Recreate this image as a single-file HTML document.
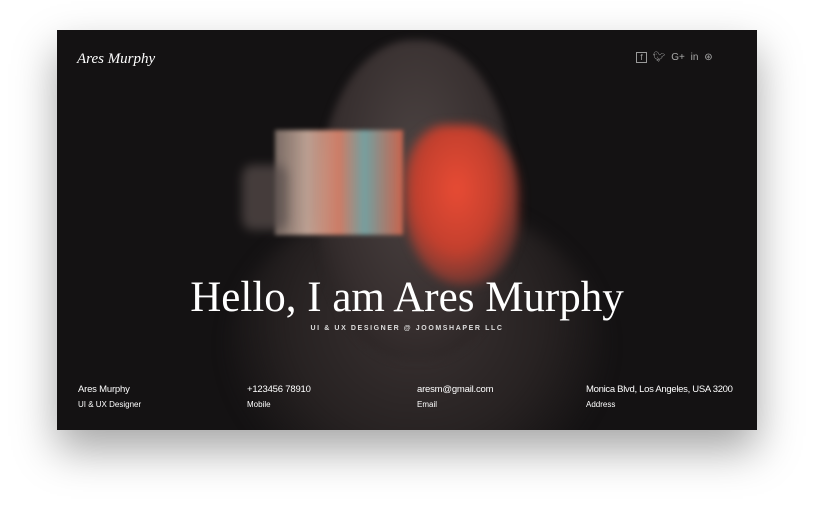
<!DOCTYPE html>
<html><head><style>
body{margin:0;width:815px;height:516px;background:#fff;position:relative;overflow:hidden;font-family:"Liberation Sans",sans-serif}
.card{position:absolute;left:57px;top:30px;width:700px;height:400px;background:#141213;box-shadow:0 20px 40px rgba(0,0,0,.35);overflow:hidden}
.a{position:absolute}
.t{color:#fff;position:absolute;white-space:nowrap}
</style></head><body>
<div class="card">
 <div class="a" style="left:170px;top:170px;width:380px;height:300px;border-radius:50%;background:radial-gradient(ellipse at 50% 40%,#3a3232 0%,#262121 50%,rgba(20,18,19,0) 75%);filter:blur(8px)"></div>
 <div class="a" style="left:262px;top:10px;width:195px;height:320px;border-radius:48% 48% 45% 45%;background:radial-gradient(ellipse at 50% 40%,#4d4443 0%,#362e2e 60%,#1e1a1a 100%);filter:blur(4px)"></div>
 <div class="a" style="left:348px;top:95px;width:115px;height:160px;border-radius:35% 45% 45% 50%;background:radial-gradient(ellipse at 45% 40%,#e84b34 0%,#c4402e 45%,rgba(120,60,55,.4) 80%,rgba(0,0,0,0) 100%);filter:blur(5px)"></div>
 <div class="a" style="left:218px;top:100px;width:128px;height:105px;background:linear-gradient(90deg,#8a7a72 0%,#d8b8a8 25%,#e88a70 50%,#7fb2b2 70%,#e06a50 100%);opacity:.85;filter:blur(2px)"></div>
 <div class="a" style="left:185px;top:135px;width:45px;height:65px;background:#5a4f4d;border-radius:20%;opacity:.7;filter:blur(5px)"></div>
 <div class="t" style="left:20px;top:21px;font-family:'Liberation Serif',serif;font-style:italic;font-size:15px">Ares Murphy</div>
 <div class="t" style="left:579px;top:22px;font-size:10px;color:#aaa;word-spacing:3px">
  <span style="display:inline-block;width:9px;height:9px;border:1px solid #999;font-size:8px;line-height:9px;text-align:center">f</span>
  <span>🐦︎</span> <span>G+</span> <span>in</span> <span>⊛</span></div>
 <div class="t" style="left:0;width:700px;text-align:center;top:243px;font-family:'Liberation Serif',serif;font-size:43px">Hello, I am Ares Murphy</div>
 <div class="t" style="left:0;width:700px;text-align:center;top:295px;font-size:7px;letter-spacing:1.6px;font-weight:bold;color:#ddd">UI &amp; UX DESIGNER @ JOOMSHAPER LLC</div>
 <div class="t" style="left:21px;top:354px;font-size:9.5px;letter-spacing:-.2px">Ares Murphy</div>
 <div class="t" style="left:21px;top:370px;font-size:8px">UI &amp; UX Designer</div>
 <div class="t" style="left:190px;top:354px;font-size:9.5px;letter-spacing:-.2px">+123456 78910</div>
 <div class="t" style="left:190px;top:370px;font-size:8px">Mobile</div>
 <div class="t" style="left:360px;top:354px;font-size:9.5px;letter-spacing:-.2px">aresm@gmail.com</div>
 <div class="t" style="left:360px;top:370px;font-size:8px">Email</div>
 <div class="t" style="left:529px;top:354px;font-size:9.5px;letter-spacing:-.3px">Monica Blvd, Los Angeles, USA 3200</div>
 <div class="t" style="left:529px;top:370px;font-size:8px">Address</div>
</div>
</body></html>
